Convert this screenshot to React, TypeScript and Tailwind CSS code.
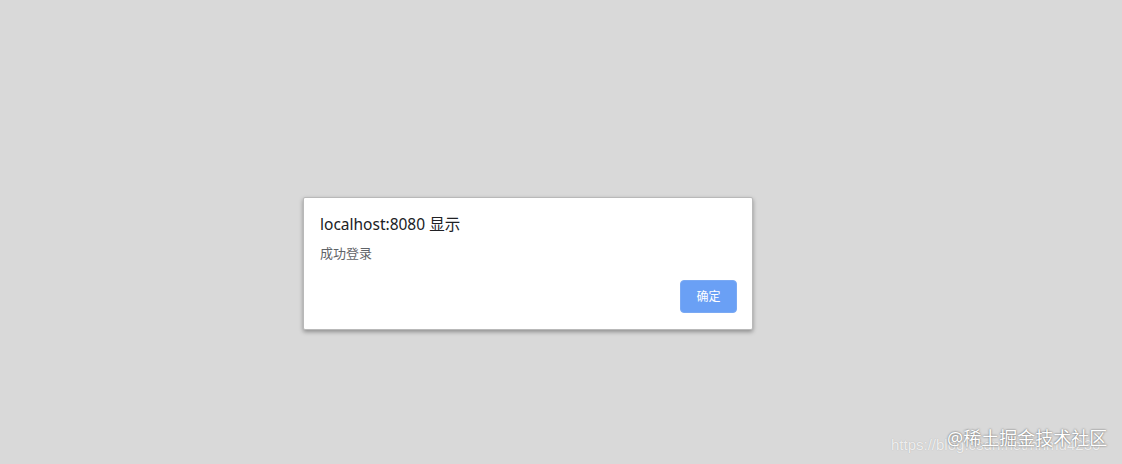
export default function App() {
  return (
    <div className="relative w-full h-[464px] overflow-hidden bg-[#d9d9d9] pt-[197px] pl-[303px] font-['Noto_Sans','Noto_Sans_CJK_SC',sans-serif]">
      {/* alert dialog */}
      <div className="w-[450px] h-[133px] bg-white border border-[#b9b9b9] rounded-[2px] shadow-[0_2px_4px_rgba(0,0,0,0.35)] pl-4 pr-[15px] pt-[12px] flex flex-col">
        <div className="text-[15.5px] leading-[28px] text-[#202124]">localhost:8080 显示</div>
        <div className="mt-[5px] text-[13px] leading-[20px] text-[#5f6368]">成功登录</div>
        <div className="mt-[17px] flex justify-end">
          <button className="w-[57px] h-[33px] rounded-[4px] bg-[#6aa0f5] border border-[#7aa9f3] text-white text-[12px] leading-none">
            确定
          </button>
        </div>
      </div>

      {/* watermark */}
      <div className="absolute left-[891px] top-[437px] text-[15px] leading-none text-white/80 font-['Liberation_Sans',sans-serif] [text-shadow:0_0_1px_rgba(0,0,0,0.25)]">
        https://blog.csdn.net/hhmu4230
      </div>
      <div className="absolute left-[947px] top-[426px] text-[18px] leading-[24px] text-white [text-shadow:0_0_2px_rgba(60,60,60,0.9)]">
        @稀土掘金技术社区
      </div>
    </div>
  );
}
